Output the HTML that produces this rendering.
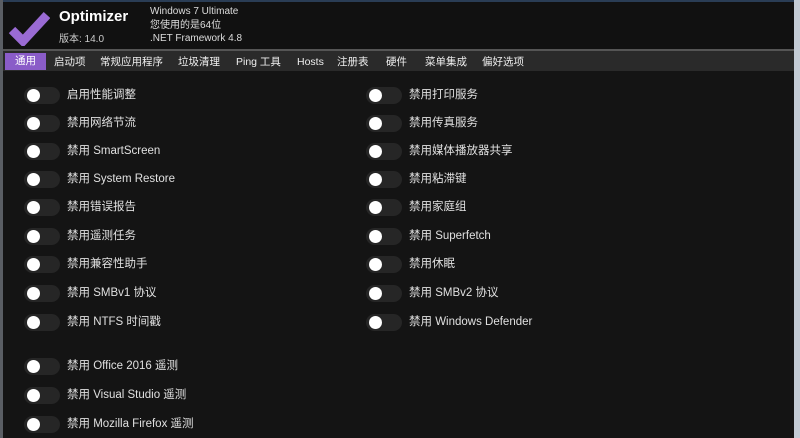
<!DOCTYPE html>
<html><head><meta charset="utf-8"><style>
*{margin:0;padding:0;box-sizing:border-box}
body{width:800px;height:438px;overflow:hidden;background:#141414;font-family:"Liberation Sans","Noto Sans CJK SC",sans-serif;color:#e6e6e6;position:relative}
.top{position:absolute;left:0;top:0;width:800px;height:2px;background:#2a3d55}
.lb{position:absolute;left:0;top:0;width:3px;height:438px;background:#5a5e64}
.rb{position:absolute;right:0;top:0;width:6px;height:438px;background:#c4ccd6}
.hdr{position:absolute;left:3px;top:2px;width:791px;height:47px;background:#111}
.tabs{position:absolute;left:3px;top:49px;width:791px;height:22px;background:#2a2a2a;border-top:2px solid #555}
.tab{position:absolute;top:3px;font-size:10.5px;color:#eee;line-height:16px}
.sel{background:#8a5cc8;color:#fff;padding:0 10px;top:2px;height:17px}
.t{position:absolute;font-size:11.5px;color:#e0e0e0;line-height:14px;top:1px}
.tg{position:absolute;width:36px;height:17px;border-radius:9px;background:#262626}
.tg::after{content:"";position:absolute;left:3px;top:2px;width:13px;height:13px;border-radius:50%;background:#fff}
.r{position:absolute;left:0;width:800px;height:17px}
</style></head><body>
<div class="hdr"></div>
<div class="top"></div>
<div class="lb"></div>
<div class="rb"></div>
<svg style="position:absolute;left:8px;top:8px" width="42" height="38" viewBox="0 0 42 38"><path d="M4 22 L15 33 L39 7" fill="none" stroke="#9a6bd4" stroke-width="9" stroke-linejoin="miter"/></svg>
<div style="position:absolute;left:59px;top:8px;font-size:15px;font-weight:bold;color:#fff">Optimizer</div>
<div style="position:absolute;left:59px;top:30px;font-size:10px;color:#ccc">版本: 14.0</div>
<div style="position:absolute;left:150px;top:5px;font-size:10px;color:#ddd;line-height:13.5px">Windows 7 Ultimate<br>您使用的是64位<br>.NET Framework 4.8</div>
<div class="tabs">
<div class="tab sel" style="left:2px">通用</div>
<div class="tab" style="left:51px">启动项</div>
<div class="tab" style="left:97px">常规应用程序</div>
<div class="tab" style="left:175px">垃圾清理</div>
<div class="tab" style="left:233px">Ping 工具</div>
<div class="tab" style="left:294px">Hosts</div>
<div class="tab" style="left:334px">注册表</div>
<div class="tab" style="left:383px">硬件</div>
<div class="tab" style="left:422px">菜单集成</div>
<div class="tab" style="left:479px">偏好选项</div>
</div>

<div class="tg" style="left:24px;top:87px"></div><div class="t" style="left:67px;top:88px">启用性能调整</div>
<div class="tg" style="left:24px;top:115px"></div><div class="t" style="left:67px;top:116px">禁用网络节流</div>
<div class="tg" style="left:24px;top:143px"></div><div class="t" style="left:67px;top:144px">禁用 SmartScreen</div>
<div class="tg" style="left:24px;top:171px"></div><div class="t" style="left:67px;top:172px">禁用 System Restore</div>
<div class="tg" style="left:24px;top:199px"></div><div class="t" style="left:67px;top:200px">禁用错误报告</div>
<div class="tg" style="left:24px;top:228px"></div><div class="t" style="left:67px;top:229px">禁用遥测任务</div>
<div class="tg" style="left:24px;top:256px"></div><div class="t" style="left:67px;top:257px">禁用兼容性助手</div>
<div class="tg" style="left:24px;top:285px"></div><div class="t" style="left:67px;top:286px">禁用 SMBv1 协议</div>
<div class="tg" style="left:24px;top:314px"></div><div class="t" style="left:67px;top:315px">禁用 NTFS 时间戳</div>

<div class="tg" style="left:366px;top:87px"></div><div class="t" style="left:409px;top:88px">禁用打印服务</div>
<div class="tg" style="left:366px;top:115px"></div><div class="t" style="left:409px;top:116px">禁用传真服务</div>
<div class="tg" style="left:366px;top:143px"></div><div class="t" style="left:409px;top:144px">禁用媒体播放器共享</div>
<div class="tg" style="left:366px;top:171px"></div><div class="t" style="left:409px;top:172px">禁用粘滞键</div>
<div class="tg" style="left:366px;top:199px"></div><div class="t" style="left:409px;top:200px">禁用家庭组</div>
<div class="tg" style="left:366px;top:228px"></div><div class="t" style="left:409px;top:229px">禁用 Superfetch</div>
<div class="tg" style="left:366px;top:256px"></div><div class="t" style="left:409px;top:257px">禁用休眠</div>
<div class="tg" style="left:366px;top:285px"></div><div class="t" style="left:409px;top:286px">禁用 SMBv2 协议</div>
<div class="tg" style="left:366px;top:314px"></div><div class="t" style="left:409px;top:315px">禁用 Windows Defender</div>

<div class="tg" style="left:24px;top:358px"></div><div class="t" style="left:67px;top:359px">禁用 Office 2016 遥测</div>
<div class="tg" style="left:24px;top:387px"></div><div class="t" style="left:67px;top:388px">禁用 Visual Studio 遥测</div>
<div class="tg" style="left:24px;top:416px"></div><div class="t" style="left:67px;top:417px">禁用 Mozilla Firefox 遥测</div>
</body></html>
